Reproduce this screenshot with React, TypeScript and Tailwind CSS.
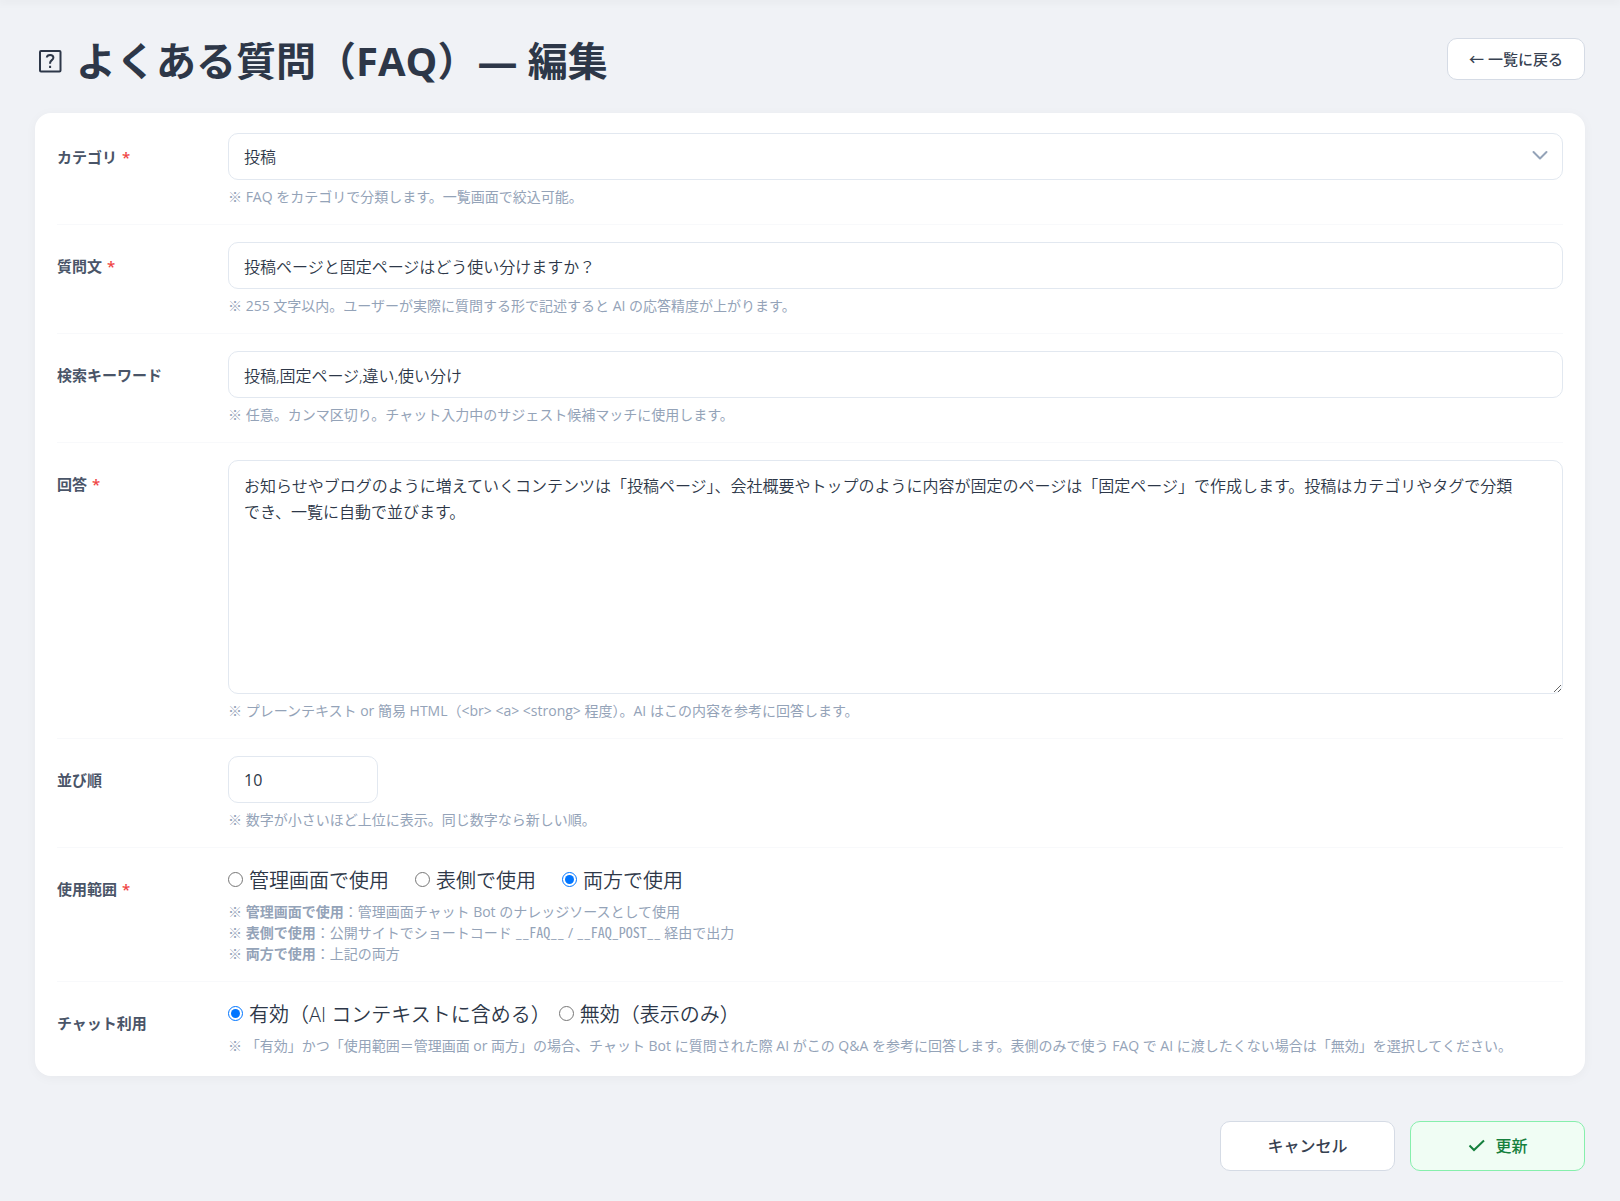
import { FC, ReactNode } from 'react';

interface IRowProps {
  label: string;
  htmlFor?: string;
  required?: boolean;
  children: ReactNode;
}

const Row: FC<IRowProps> = ({ label, htmlFor, required, children }) => {
  const content = (
    <>
      {label}
      {required && <span className="ml-[5px] text-[#ef4444]">*</span>}
    </>
  );
  const labelClass = 'w-[171px] shrink-0 pt-3 text-[15px] leading-6 font-semibold text-[#4a5568]';

  return (
    <div
      className="flex border-b border-[#f8f9fb] py-[17px] last:border-b-0"
      role={htmlFor ? undefined : 'radiogroup'}
      aria-label={htmlFor ? undefined : label}
    >
      {htmlFor ? (
        <label htmlFor={htmlFor} className={labelClass}>
          {content}
        </label>
      ) : (
        <div className={labelClass}>{content}</div>
      )}
      <div className="min-w-0 flex-1">{children}</div>
    </div>
  );
};

const Hint: FC<{ children: ReactNode }> = ({ children }) => (
  <p className="mt-1.5 text-[14px] leading-[21px] text-[#94a3b8]">{children}</p>
);

interface IRadioProps {
  name: string;
  value: string;
  label: string;
  checked?: boolean;
}

const Radio: FC<IRadioProps> = ({ name, value, label, checked }) => (
  <label className="flex items-center gap-1.5 text-xl leading-7 font-[350] text-[#2d3748]">
    <input type="radio" name={name} value={value} defaultChecked={checked} className="mb-1 size-[15px]" />
    {label}
  </label>
);

const fieldClass =
  'block w-full rounded-[10px] border border-[#e2e8f0] bg-white px-[15px] text-base text-[#2d3748] outline-none';

export default function App() {
  return (
    <div className="min-h-screen bg-[#f0f2f6] font-['Open_Sans','Noto_Sans_CJK_JP',sans-serif] text-[#2d3748]">
      <div className="h-0 shadow-[0_0_8px_2px_rgba(0,0,0,0.06)]" />
      <main className="px-[35px] pt-[31px] pb-[30px]">
        <header className="flex items-center justify-between">
          <h1 className="flex items-center gap-[11px] pt-1 text-[40px] leading-[52px] font-bold">
            <svg width="30" height="30" viewBox="0 0 30 30" fill="none" stroke="currentColor" strokeWidth="2" aria-hidden="true">
              <rect x="5" y="5" width="20.500" height="20.500" rx="1" />
              <path d="M11.800 11.500c.2-1.700 1.500-2.600 3.300-2.600 2 0 3.300 1 3.300 2.800 0 2.300-3.300 2.600-3.300 5.300v.8M15.100 19.800v2.200" />
            </svg>
            よくある質問（FAQ）— 編集
          </h1>
          <a
            href="#list"
            className="rounded-[10px] border border-[#d5dbe5] bg-white px-[21px] py-2 text-[15px] leading-[24px] font-medium text-[#374151]"
          >
            ← 一覧に戻る
          </a>
        </header>

        <form className="mt-[26px]">
          <section className="rounded-2xl bg-white px-[22px] py-[3px] shadow-[0_2px_12px_rgba(0,0,0,0.04)]">
            <Row label="カテゴリ" htmlFor="category" required>
              <div className="relative">
                <select id="category" className={`${fieldClass} h-[47px] appearance-none font-[350]`}>
                  <option>投稿</option>
                </select>
                <svg
                  className="pointer-events-none absolute top-[14px] right-[14px] text-[#94a3b8]"
                  width="18"
                  height="18"
                  viewBox="0 0 18 18"
                  fill="none"
                  stroke="currentColor"
                  strokeWidth="2"
                  strokeLinecap="round"
                  strokeLinejoin="round"
                  aria-hidden="true"
                >
                  <path d="M2.500 5 9 11.500 15.500 5" />
                </svg>
              </div>
              <Hint>※ FAQ をカテゴリで分類します。一覧画面で絞込可能。</Hint>
            </Row>

            <Row label="質問文" htmlFor="question" required>
              <input
                id="question"
                type="text"
                defaultValue="投稿ページと固定ページはどう使い分けますか？"
                className={`${fieldClass} h-[47px] font-[350]`}
              />
              <Hint>※ 255 文字以内。ユーザーが実際に質問する形で記述すると AI の応答精度が上がります。</Hint>
            </Row>

            <Row label="検索キーワード" htmlFor="keywords">
              <input
                id="keywords"
                type="text"
                defaultValue="投稿,固定ページ,違い,使い分け"
                className={`${fieldClass} h-[47px] font-[350]`}
              />
              <Hint>※ 任意。カンマ区切り。チャット入力中のサジェスト候補マッチに使用します。</Hint>
            </Row>

            <Row label="回答" htmlFor="answer" required>
              <textarea
                id="answer"
                className={`${fieldClass} h-[234px] py-3 pr-10 leading-[26px] font-[350]`}
                defaultValue="お知らせやブログのように増えていくコンテンツは「投稿ページ」、会社概要やトップのように内容が固定のページは「固定ページ」で作成します。投稿はカテゴリやタグで分類でき、一覧に自動で並びます。"
              />
              <Hint>
                ※ プレーンテキスト or 簡易 HTML（&lt;br&gt; &lt;a&gt; &lt;strong&gt; 程度）。AI はこの内容を参考に回答します。
              </Hint>
            </Row>

            <Row label="並び順" htmlFor="order">
              <div className="w-[150px]">
                <input id="order" type="text" inputMode="numeric" defaultValue="10" className={`${fieldClass} h-[47px]`} />
              </div>
              <Hint>※ 数字が小さいほど上位に表示。同じ数字なら新しい順。</Hint>
            </Row>

            <Row label="使用範囲" required>
              <div className="flex gap-[26px] pt-0.5">
                <Radio name="scope" value="admin" label="管理画面で使用" />
                <Radio name="scope" value="front" label="表側で使用" />
                <Radio name="scope" value="both" label="両方で使用" checked />
              </div>
              <Hint>
                ※ <strong>管理画面で使用</strong>：管理画面チャット Bot のナレッジソースとして使用
                <br />※ <strong>表側で使用</strong>：公開サイトでショートコード{' '}
                <code className="font-['Noto_Sans_Mono_CJK_JP',monospace]">__FAQ__</code> /{' '}
                <code className="font-['Noto_Sans_Mono_CJK_JP',monospace]">__FAQ_POST__</code> 経由で出力
                <br />※ <strong>両方で使用</strong>：上記の両方
              </Hint>
            </Row>

            <Row label="チャット利用">
              <div className="flex gap-2 pt-0.5">
                <Radio name="chat" value="on" label="有効（AI コンテキストに含める）" checked />
                <Radio name="chat" value="off" label="無効（表示のみ）" />
              </div>
              <Hint>
                ※ 「有効」かつ「使用範囲＝管理画面 or 両方」の場合、チャット Bot に質問された際 AI がこの Q&amp;A
                を参考に回答します。表側のみで使う FAQ で AI に渡したくない場合は「無効」を選択してください。
              </Hint>
            </Row>
          </section>

          <div className="mt-[45px] flex justify-end gap-[15px]">
            <button
              type="button"
              className="h-[50px] w-[175px] rounded-[10px] border border-[#d5dbe5] bg-white font-medium text-[#374151]"
            >
              キャンセル
            </button>
            <button
              type="submit"
              className="flex h-[50px] w-[175px] items-center justify-center gap-2.5 rounded-[10px] border border-[#86efac] bg-[#f0fdf4] font-medium text-[#15803d]"
            >
              <svg width="18" height="18" viewBox="0 0 18 18" fill="none" stroke="currentColor" strokeWidth="2" aria-hidden="true">
                <path d="m2.500 8.500 4.500 4.500L17 3.500" />
              </svg>
              更新
            </button>
          </div>
        </form>
      </main>
    </div>
  );
}
